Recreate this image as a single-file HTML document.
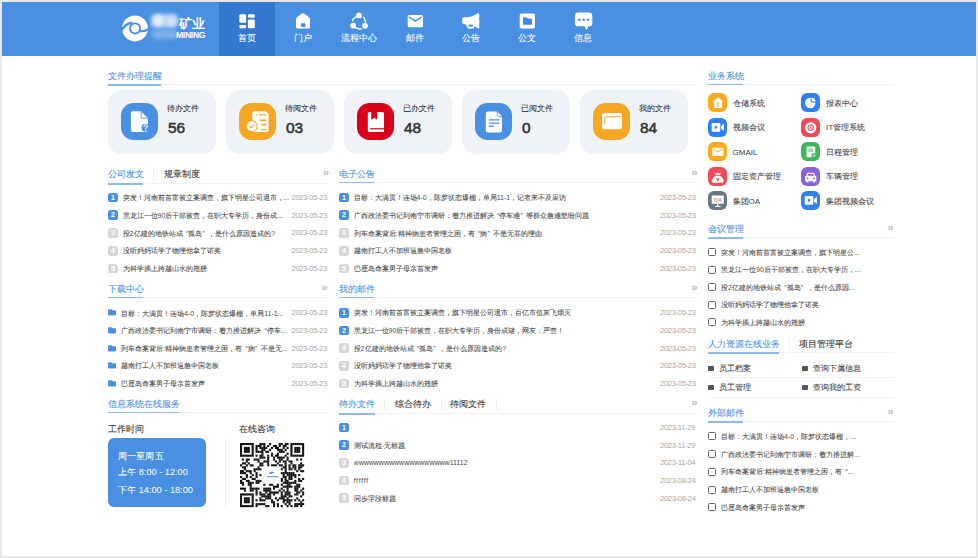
<!DOCTYPE html>
<html><head><meta charset="utf-8"><style>
*{margin:0;padding:0;box-sizing:border-box;}
html,body{width:978px;height:558px;overflow:hidden;background:#e9e8e6;font-family:"Liberation Sans",sans-serif;}
#page{position:absolute;left:2px;top:2px;width:974px;height:554px;background:#fff;}
#hdr{position:absolute;left:2px;top:2px;width:974px;height:53.6px;background:#4a90e2;}
.nav{position:absolute;top:2px;width:56px;height:53.6px;color:#fff;font-size:9px;line-height:9px;text-align:center;}
.nav.act{background:#3479cf;}
.nav svg{position:absolute;left:20px;top:12px;}
.nav .nl{position:absolute;left:0;right:0;top:32.3px;white-space:nowrap;}
.ttl{position:absolute;font-size:9px;line-height:9px;color:#4a90e2;white-space:nowrap;}
.tab2{position:absolute;font-size:9px;line-height:9px;color:#333;white-space:nowrap;}
.ul{position:absolute;height:1.6px;background:#8dbaee;margin-top:0.4px;}
.gl{position:absolute;height:1px;background:#f0f1f3;}
.vs{position:absolute;width:1px;background:#eceef0;}
.more{position:absolute;font-size:11px;line-height:9px;color:#b8b8b8;font-weight:bold;margin-left:2px;margin-top:-1px;}
.card{position:absolute;top:90px;width:108px;height:64px;border-radius:14px;background:#eff2f7;}
.card .ic{position:absolute;left:12.5px;top:12.5px;width:37px;height:37px;border-radius:12.5px;}
.card .ic svg{position:absolute;left:0;top:0;}
.card .lb{position:absolute;left:59px;top:15px;font-size:8px;line-height:8px;color:#333;white-space:nowrap;}
.card .nm{position:absolute;left:60px;top:29.6px;font-size:15.4px;line-height:16px;font-weight:normal;-webkit-text-stroke:0.55px #333;color:#333;}
.tx{position:absolute;font-size:7px;line-height:9px;color:#4a4a4a;white-space:nowrap;overflow:hidden;}
.bd{position:absolute;width:9.8px;height:9.8px;border-radius:2.6px;font-size:7px;line-height:9.8px;font-weight:bold;text-align:center;color:#fff;background:#4a90e2;}
.bd.g{background:#d6d7d9;}
.dt{position:absolute;font-size:7.6px;line-height:8px;color:#a8a8a8;letter-spacing:-0.32px;white-space:nowrap;}
.cb{position:absolute;width:8px;height:8px;border:1.3px solid #666;border-radius:1.5px;}
.sq{position:absolute;width:6px;height:5px;background:#555;border-radius:1px;}
.lb2{position:absolute;font-size:8px;line-height:9px;color:#444;white-space:nowrap;}
.bi{position:absolute;width:19px;height:19px;border-radius:6px;}
.bi svg{position:absolute;left:0;top:0;}
.c{display:inline-block;width:1em;-webkit-text-stroke:0.08px currentColor;}
</style></head><body>
<div id="page"></div><div id="hdr"></div>
<div class="ttl" style="left:108px;top:72px"><span class="c">文</span><span class="c">件</span><span class="c">办</span><span class="c">理</span><span class="c">提</span><span class="c">醒</span></div>
<div class="gl" style="left:108px;top:84px;width:590px"></div>
<div class="ul" style="left:108px;top:84px;width:53px"></div>
<div class="card" style="left:108px"><div class="ic" style="background:#4a90e2"><svg width="37" height="37" viewBox="0 0 37 37" style="position:absolute;left:0;top:0;"><path d="M11.5 8.2 L19.8 8.2 L27 15.3 L27 27.3 Q27 28.9 25.4 28.9 L11.5 28.9 Q9.9 28.9 9.9 27.3 L9.9 9.8 Q9.9 8.2 11.5 8.2 Z" fill="#fff"/><path d="M20.6 8.6 L20.6 13.6 Q20.6 14.5 21.5 14.5 L26.6 14.5 Z" fill="#4a90e2" opacity="0.0"/><path d="M20.2 8.2 L20.2 14.3 Q20.2 15.2 21.1 15.2 L27 15.2" stroke="#4a90e2" stroke-width="0.9" fill="none"/><circle cx="24.6" cy="24.8" r="4" fill="#4a90e2"/><path d="M23 23.4 Q23 21.8 24.7 21.8 Q26.3 21.8 26.3 23.3 Q26.3 24.3 25.2 24.8 Q24.7 25.1 24.7 26" stroke="#fff" stroke-width="1.1" fill="none" stroke-linecap="round"/><circle cx="24.7" cy="28" r="0.7" fill="#fff"/></svg></div><div class="lb"><span class="c">待</span><span class="c">办</span><span class="c">文</span><span class="c">件</span></div><div class="nm">56</div></div>
<div class="card" style="left:226px"><div class="ic" style="background:#f5a623"><svg width="37" height="37" viewBox="0 0 37 37" style="position:absolute;left:0;top:0;"><path d="M15 8.2 L26.5 8.2 L29.6 11.3 L29.6 27.3 Q29.6 28.9 28 28.9 L15 28.9 Q13.4 28.9 13.4 27.3 L13.4 9.8 Q13.4 8.2 15 8.2 Z" fill="#fff"/><rect x="20" y="11.2" width="7.5" height="1.4" rx="0.7" fill="#f5a623"/><circle cx="17.3" cy="11.9" r="0.9" fill="#f5a623"/><rect x="20.3" y="16.5" width="7.2" height="1.4" rx="0.7" fill="#f5a623"/><rect x="22.2" y="21" width="5.3" height="1.4" rx="0.7" fill="#f5a623"/><rect x="22.2" y="25.9" width="5.3" height="1.4" rx="0.7" fill="#f5a623"/><circle cx="12.7" cy="23.2" r="5.9" fill="#f5a623"/><circle cx="12.7" cy="23.2" r="4.9" fill="#fff"/><path d="M10.6 23.4 L12.1 24.8 L14.8 21.8" stroke="#f5a623" stroke-width="1.1" fill="none" stroke-linecap="round" stroke-linejoin="round"/></svg></div><div class="lb"><span class="c">待</span><span class="c">阅</span><span class="c">文</span><span class="c">件</span></div><div class="nm">03</div></div>
<div class="card" style="left:344px"><div class="ic" style="background:#d9001b"><svg width="37" height="37" viewBox="0 0 37 37" style="position:absolute;left:0;top:0;"><path d="M12.4 8.9 L25.4 8.9 Q27 8.9 27 10.5 L27 28.9 L12.4 28.9 Q10.8 28.9 10.8 27.3 L10.8 10.5 Q10.8 8.9 12.4 8.9 Z" fill="#fff"/><path d="M14.2 8.9 L20.2 8.9 L20.2 16.8 L17.2 14.8 L14.2 16.8 Z" fill="#d9001b"/><rect x="13.2" y="25.2" width="13.8" height="1.2" fill="#d9001b"/></svg></div><div class="lb"><span class="c">已</span><span class="c">办</span><span class="c">文</span><span class="c">件</span></div><div class="nm">48</div></div>
<div class="card" style="left:462px"><div class="ic" style="background:#4a90e2"><svg width="37" height="37" viewBox="0 0 37 37" style="position:absolute;left:0;top:0;"><path d="M13.2 8.5 L22.2 8.5 L27 13.3 L27 27.2 Q27 29.6 24.6 29.6 L13.2 29.6 Q10.8 29.6 10.8 27.2 L10.8 10.9 Q10.8 8.5 13.2 8.5 Z" fill="#fff"/><path d="M22.2 8.5 L22.2 11.8 Q22.2 13.3 23.7 13.3 L27 13.3" stroke="#4a90e2" stroke-width="0.9" fill="none"/><rect x="13.8" y="16.2" width="10.5" height="1.3" rx="0.5" fill="#4a90e2"/><rect x="13.8" y="19.4" width="10.5" height="1.3" rx="0.5" fill="#4a90e2"/><rect x="13.8" y="22.6" width="4.9" height="1.3" rx="0.5" fill="#4a90e2"/></svg></div><div class="lb"><span class="c">已</span><span class="c">阅</span><span class="c">文</span><span class="c">件</span></div><div class="nm">0</div></div>
<div class="card" style="left:580px"><div class="ic" style="background:#f5a623"><svg width="37" height="37" viewBox="0 0 37 37" style="position:absolute;left:0;top:0;"><rect x="9" y="10" width="20" height="16.2" rx="2.2" fill="#fff"/><path d="M11.9 20.3 L11.9 14.8 Q11.9 13.8 12.9 13.8 L27.6 13.8" stroke="#f5a623" stroke-width="1.1" fill="none" stroke-linecap="round"/></svg></div><div class="lb"><span class="c">我</span><span class="c">的</span><span class="c">文</span><span class="c">件</span></div><div class="nm">84</div></div>
<div class="ttl" style="left:108px;top:169.5px"><span class="c">公</span><span class="c">司</span><span class="c">发</span><span class="c">文</span></div>
<div class="vs" style="left:153px;top:168px;height:11px"></div>
<div class="tab2" style="left:163.5px;top:169.5px"><span class="c">规</span><span class="c">章</span><span class="c">制</span><span class="c">度</span></div>
<div class="gl" style="left:108px;top:183px;width:220px"></div>
<div class="ul" style="left:108px;top:183px;width:35px"></div>
<div class="more" style="left:321px;top:169px">&raquo;</div>
<div class="bd" style="left:108px;top:192.7px">1</div>
<div class="tx" style="left:122.6px;top:193.1px;width:166px"><span class="c">突</span><span class="c">发</span><span class="c">！</span><span class="c">河</span><span class="c">南</span><span class="c">前</span><span class="c">首</span><span class="c">富</span><span class="c">被</span><span class="c">立</span><span class="c">案</span><span class="c">调</span><span class="c">查</span><span class="c">，</span><span class="c">旗</span><span class="c">下</span><span class="c">明</span><span class="c">星</span><span class="c">公</span><span class="c">司</span><span class="c">退</span><span class="c">市</span><span class="c">，</span>...</div>
<div class="dt" style="left:291.5px;top:194.0px">2023-05-23</div>
<div class="bd" style="left:108px;top:210.4px">2</div>
<div class="tx" style="left:122.6px;top:210.8px;width:166px"><span class="c">黑</span><span class="c">龙</span><span class="c">江</span><span class="c">一</span><span class="c">位</span>90<span class="c">后</span><span class="c">干</span><span class="c">部</span><span class="c">被</span><span class="c">查</span><span class="c">，</span><span class="c">在</span><span class="c">职</span><span class="c">大</span><span class="c">专</span><span class="c">学</span><span class="c">历</span><span class="c">，</span><span class="c">身</span><span class="c">份</span><span class="c">成</span>...</div>
<div class="dt" style="left:291.5px;top:211.7px">2023-05-23</div>
<div class="bd g" style="left:108px;top:228.1px">3</div>
<div class="tx" style="left:122.6px;top:228.5px;width:166px"><span class="c">投</span>2<span class="c">亿</span><span class="c">建</span><span class="c">的</span><span class="c">地</span><span class="c">铁</span><span class="c">站</span><span class="c">成</span><span style="margin-left:3.5px">“</span><span class="c">孤</span><span class="c">岛</span><span style="margin-right:3.5px">”</span><span class="c">，</span><span class="c">是</span><span class="c">什</span><span class="c">么</span><span class="c">原</span><span class="c">因</span><span class="c">造</span><span class="c">成</span><span class="c">的</span>?</div>
<div class="dt" style="left:291.5px;top:229.4px">2023-05-23</div>
<div class="bd g" style="left:108px;top:245.8px">4</div>
<div class="tx" style="left:122.6px;top:246.2px;width:166px"><span class="c">没</span><span class="c">听</span><span class="c">妈</span><span class="c">妈</span><span class="c">话</span><span class="c">学</span><span class="c">了</span><span class="c">物</span><span class="c">理</span><span class="c">他</span><span class="c">拿</span><span class="c">了</span><span class="c">诺</span><span class="c">奖</span></div>
<div class="dt" style="left:291.5px;top:247.1px">2023-05-23</div>
<div class="bd g" style="left:108px;top:263.5px">5</div>
<div class="tx" style="left:122.6px;top:263.9px;width:166px"><span class="c">为</span><span class="c">科</span><span class="c">学</span><span class="c">插</span><span class="c">上</span><span class="c">跨</span><span class="c">越</span><span class="c">山</span><span class="c">水</span><span class="c">的</span><span class="c">翅</span><span class="c">膀</span></div>
<div class="dt" style="left:291.5px;top:264.8px">2023-05-23</div>
<div class="ttl" style="left:339px;top:169.5px"><span class="c">电</span><span class="c">子</span><span class="c">公</span><span class="c">告</span></div>
<div class="gl" style="left:339px;top:181.5px;width:359px"></div>
<div class="ul" style="left:339px;top:181.5px;width:35px"></div>
<div class="more" style="left:689.5px;top:168.5px">&raquo;</div>
<div class="bd" style="left:339px;top:192.7px">1</div>
<div class="tx" style="left:353.6px;top:193.1px;width:310px"><span class="c">目</span><span class="c">标</span><span class="c">：</span><span class="c">大</span><span class="c">满</span><span class="c">贯</span><span class="c">！</span><span class="c">连</span><span class="c">场</span>4-0<span class="c">，</span><span class="c">陈</span><span class="c">梦</span><span class="c">状</span><span class="c">态</span><span class="c">爆</span><span class="c">棚</span><span class="c">，</span><span class="c">单</span><span class="c">局</span>11-1<span class="c">，</span><span class="c">记</span><span class="c">者</span><span class="c">来</span><span class="c">不</span><span class="c">及</span><span class="c">采</span><span class="c">访</span></div>
<div class="dt" style="left:660px;top:194.0px">2023-05-23</div>
<div class="bd" style="left:339px;top:210.4px">2</div>
<div class="tx" style="left:353.6px;top:210.8px;width:310px"><span class="c">广</span><span class="c">西</span><span class="c">政</span><span class="c">法</span><span class="c">委</span><span class="c">书</span><span class="c">记</span><span class="c">到</span><span class="c">南</span><span class="c">宁</span><span class="c">市</span><span class="c">调</span><span class="c">研</span><span class="c">：</span><span class="c">着</span><span class="c">力</span><span class="c">推</span><span class="c">进</span><span class="c">解</span><span class="c">决</span><span style="margin-left:3.5px">“</span><span class="c">停</span><span class="c">车</span><span class="c">难</span><span style="margin-right:3.5px">”</span><span class="c">等</span><span class="c">群</span><span class="c">众</span><span class="c">急</span><span class="c">难</span><span class="c">愁</span><span class="c">盼</span><span class="c">问</span><span class="c">题</span></div>
<div class="dt" style="left:660px;top:211.7px">2023-05-23</div>
<div class="bd g" style="left:339px;top:228.1px">3</div>
<div class="tx" style="left:353.6px;top:228.5px;width:310px"><span class="c">列</span><span class="c">车</span><span class="c">命</span><span class="c">案</span><span class="c">背</span><span class="c">后</span>:<span class="c">精</span><span class="c">神</span><span class="c">病</span><span class="c">患</span><span class="c">者</span><span class="c">管</span><span class="c">理</span><span class="c">之</span><span class="c">困</span><span class="c">，</span><span class="c">有</span><span style="margin-left:3.5px">“</span><span class="c">病</span><span style="margin-right:3.5px">”</span><span class="c">不</span><span class="c">是</span><span class="c">无</span><span class="c">罪</span><span class="c">的</span><span class="c">理</span><span class="c">由</span></div>
<div class="dt" style="left:660px;top:229.4px">2023-05-23</div>
<div class="bd g" style="left:339px;top:245.8px">4</div>
<div class="tx" style="left:353.6px;top:246.2px;width:310px"><span class="c">越</span><span class="c">南</span><span class="c">打</span><span class="c">工</span><span class="c">人</span><span class="c">不</span><span class="c">加</span><span class="c">班</span><span class="c">逼</span><span class="c">急</span><span class="c">中</span><span class="c">国</span><span class="c">老</span><span class="c">板</span></div>
<div class="dt" style="left:660px;top:247.1px">2023-05-23</div>
<div class="bd g" style="left:339px;top:263.5px">5</div>
<div class="tx" style="left:353.6px;top:263.9px;width:310px"><span class="c">巴</span><span class="c">厘</span><span class="c">岛</span><span class="c">命</span><span class="c">案</span><span class="c">男</span><span class="c">子</span><span class="c">母</span><span class="c">亲</span><span class="c">首</span><span class="c">发</span><span class="c">声</span></div>
<div class="dt" style="left:660px;top:264.8px">2023-05-23</div>
<div class="ttl" style="left:108px;top:284.5px"><span class="c">下</span><span class="c">载</span><span class="c">中</span><span class="c">心</span></div>
<div class="gl" style="left:108px;top:296.5px;width:220px"></div>
<div class="ul" style="left:108px;top:296.5px;width:35px"></div>
<div class="more" style="left:319.5px;top:283.5px">&raquo;</div>
<div class="a" style="position:absolute;left:108px;top:309.4px"><svg width="9" height="7" viewBox="0 0 9 7" style="position:absolute;left:0;top:0"><path d="M1 0.2 L3.6 0.2 L4.4 1.2 L7 1.2 Q8 1.2 8 2.2 L8 5.6 Q8 6.4 7 6.4 L1 6.4 Q0 6.4 0 5.6 L0 1.2 Q0 0.2 1 0.2 Z" fill="#4a90e2"/><path d="M1.2 1.6 Q1.6 2.8 1 3.6" stroke="#8fbcf0" stroke-width="0.5" fill="none"/></svg></div>
<div class="tx" style="left:121px;top:308.5px;width:167px"><span class="c">目</span><span class="c">标</span><span class="c">：</span><span class="c">大</span><span class="c">满</span><span class="c">贯</span><span class="c">！</span><span class="c">连</span><span class="c">场</span>4-0<span class="c">，</span><span class="c">陈</span><span class="c">梦</span><span class="c">状</span><span class="c">态</span><span class="c">爆</span><span class="c">棚</span><span class="c">，</span><span class="c">单</span><span class="c">局</span>11-1...</div>
<div class="dt" style="left:291.5px;top:309.4px">2023-05-23</div>
<div class="a" style="position:absolute;left:108px;top:327.0px"><svg width="9" height="7" viewBox="0 0 9 7" style="position:absolute;left:0;top:0"><path d="M1 0.2 L3.6 0.2 L4.4 1.2 L7 1.2 Q8 1.2 8 2.2 L8 5.6 Q8 6.4 7 6.4 L1 6.4 Q0 6.4 0 5.6 L0 1.2 Q0 0.2 1 0.2 Z" fill="#4a90e2"/><path d="M1.2 1.6 Q1.6 2.8 1 3.6" stroke="#8fbcf0" stroke-width="0.5" fill="none"/></svg></div>
<div class="tx" style="left:121px;top:326.1px;width:167px"><span class="c">广</span><span class="c">西</span><span class="c">政</span><span class="c">法</span><span class="c">委</span><span class="c">书</span><span class="c">记</span><span class="c">到</span><span class="c">南</span><span class="c">宁</span><span class="c">市</span><span class="c">调</span><span class="c">研</span><span class="c">：</span><span class="c">着</span><span class="c">力</span><span class="c">推</span><span class="c">进</span><span class="c">解</span><span class="c">决</span><span style="margin-left:3.5px">“</span><span class="c">停</span><span class="c">车</span>...</div>
<div class="dt" style="left:291.5px;top:327.0px">2023-05-23</div>
<div class="a" style="position:absolute;left:108px;top:344.6px"><svg width="9" height="7" viewBox="0 0 9 7" style="position:absolute;left:0;top:0"><path d="M1 0.2 L3.6 0.2 L4.4 1.2 L7 1.2 Q8 1.2 8 2.2 L8 5.6 Q8 6.4 7 6.4 L1 6.4 Q0 6.4 0 5.6 L0 1.2 Q0 0.2 1 0.2 Z" fill="#4a90e2"/><path d="M1.2 1.6 Q1.6 2.8 1 3.6" stroke="#8fbcf0" stroke-width="0.5" fill="none"/></svg></div>
<div class="tx" style="left:121px;top:343.7px;width:167px"><span class="c">列</span><span class="c">车</span><span class="c">命</span><span class="c">案</span><span class="c">背</span><span class="c">后</span>:<span class="c">精</span><span class="c">神</span><span class="c">病</span><span class="c">患</span><span class="c">者</span><span class="c">管</span><span class="c">理</span><span class="c">之</span><span class="c">困</span><span class="c">，</span><span class="c">有</span><span style="margin-left:3.5px">“</span><span class="c">病</span><span style="margin-right:3.5px">”</span><span class="c">不</span><span class="c">是</span><span class="c">无</span>...</div>
<div class="dt" style="left:291.5px;top:344.6px">2023-05-23</div>
<div class="a" style="position:absolute;left:108px;top:362.2px"><svg width="9" height="7" viewBox="0 0 9 7" style="position:absolute;left:0;top:0"><path d="M1 0.2 L3.6 0.2 L4.4 1.2 L7 1.2 Q8 1.2 8 2.2 L8 5.6 Q8 6.4 7 6.4 L1 6.4 Q0 6.4 0 5.6 L0 1.2 Q0 0.2 1 0.2 Z" fill="#4a90e2"/><path d="M1.2 1.6 Q1.6 2.8 1 3.6" stroke="#8fbcf0" stroke-width="0.5" fill="none"/></svg></div>
<div class="tx" style="left:121px;top:361.3px;width:167px"><span class="c">越</span><span class="c">南</span><span class="c">打</span><span class="c">工</span><span class="c">人</span><span class="c">不</span><span class="c">加</span><span class="c">班</span><span class="c">逼</span><span class="c">急</span><span class="c">中</span><span class="c">国</span><span class="c">老</span><span class="c">板</span></div>
<div class="dt" style="left:291.5px;top:362.2px">2023-05-23</div>
<div class="a" style="position:absolute;left:108px;top:379.8px"><svg width="9" height="7" viewBox="0 0 9 7" style="position:absolute;left:0;top:0"><path d="M1 0.2 L3.6 0.2 L4.4 1.2 L7 1.2 Q8 1.2 8 2.2 L8 5.6 Q8 6.4 7 6.4 L1 6.4 Q0 6.4 0 5.6 L0 1.2 Q0 0.2 1 0.2 Z" fill="#4a90e2"/><path d="M1.2 1.6 Q1.6 2.8 1 3.6" stroke="#8fbcf0" stroke-width="0.5" fill="none"/></svg></div>
<div class="tx" style="left:121px;top:378.9px;width:167px"><span class="c">巴</span><span class="c">厘</span><span class="c">岛</span><span class="c">命</span><span class="c">案</span><span class="c">男</span><span class="c">子</span><span class="c">母</span><span class="c">亲</span><span class="c">首</span><span class="c">发</span><span class="c">声</span></div>
<div class="dt" style="left:291.5px;top:379.8px">2023-05-23</div>
<div class="ttl" style="left:339px;top:284.5px"><span class="c">我</span><span class="c">的</span><span class="c">邮</span><span class="c">件</span></div>
<div class="gl" style="left:339px;top:296.5px;width:359px"></div>
<div class="ul" style="left:339px;top:296.5px;width:35px"></div>
<div class="more" style="left:689.5px;top:283.5px">&raquo;</div>
<div class="bd" style="left:339px;top:307.8px">1</div>
<div class="tx" style="left:353.6px;top:308.2px;width:310px"><span class="c">突</span><span class="c">发</span><span class="c">！</span><span class="c">河</span><span class="c">南</span><span class="c">前</span><span class="c">首</span><span class="c">富</span><span class="c">被</span><span class="c">立</span><span class="c">案</span><span class="c">调</span><span class="c">查</span><span class="c">，</span><span class="c">旗</span><span class="c">下</span><span class="c">明</span><span class="c">星</span><span class="c">公</span><span class="c">司</span><span class="c">退</span><span class="c">市</span><span class="c">，</span><span class="c">百</span><span class="c">亿</span><span class="c">市</span><span class="c">值</span><span class="c">灰</span><span class="c">飞</span><span class="c">烟</span><span class="c">灭</span></div>
<div class="dt" style="left:660px;top:309.1px">2023-05-23</div>
<div class="bd" style="left:339px;top:325.5px">2</div>
<div class="tx" style="left:353.6px;top:325.9px;width:310px"><span class="c">黑</span><span class="c">龙</span><span class="c">江</span><span class="c">一</span><span class="c">位</span>90<span class="c">后</span><span class="c">干</span><span class="c">部</span><span class="c">被</span><span class="c">查</span><span class="c">，</span><span class="c">在</span><span class="c">职</span><span class="c">大</span><span class="c">专</span><span class="c">学</span><span class="c">历</span><span class="c">，</span><span class="c">身</span><span class="c">份</span><span class="c">成</span><span class="c">谜</span><span class="c">，</span><span class="c">网</span><span class="c">友</span><span class="c">：</span><span class="c">严</span><span class="c">查</span><span class="c">！</span></div>
<div class="dt" style="left:660px;top:326.8px">2023-05-23</div>
<div class="bd g" style="left:339px;top:343.2px">3</div>
<div class="tx" style="left:353.6px;top:343.6px;width:310px"><span class="c">投</span>2<span class="c">亿</span><span class="c">建</span><span class="c">的</span><span class="c">地</span><span class="c">铁</span><span class="c">站</span><span class="c">成</span><span style="margin-left:3.5px">“</span><span class="c">孤</span><span class="c">岛</span><span style="margin-right:3.5px">”</span><span class="c">，</span><span class="c">是</span><span class="c">什</span><span class="c">么</span><span class="c">原</span><span class="c">因</span><span class="c">造</span><span class="c">成</span><span class="c">的</span>?</div>
<div class="dt" style="left:660px;top:344.5px">2023-05-23</div>
<div class="bd g" style="left:339px;top:360.9px">4</div>
<div class="tx" style="left:353.6px;top:361.3px;width:310px"><span class="c">没</span><span class="c">听</span><span class="c">妈</span><span class="c">妈</span><span class="c">话</span><span class="c">学</span><span class="c">了</span><span class="c">物</span><span class="c">理</span><span class="c">他</span><span class="c">拿</span><span class="c">了</span><span class="c">诺</span><span class="c">奖</span></div>
<div class="dt" style="left:660px;top:362.2px">2023-05-23</div>
<div class="bd g" style="left:339px;top:378.6px">5</div>
<div class="tx" style="left:353.6px;top:379.0px;width:310px"><span class="c">为</span><span class="c">科</span><span class="c">学</span><span class="c">插</span><span class="c">上</span><span class="c">跨</span><span class="c">越</span><span class="c">山</span><span class="c">水</span><span class="c">的</span><span class="c">翅</span><span class="c">膀</span></div>
<div class="dt" style="left:660px;top:379.9px">2023-05-23</div>
<div class="ttl" style="left:108px;top:399.5px"><span class="c">信</span><span class="c">息</span><span class="c">系</span><span class="c">统</span><span class="c">在</span><span class="c">线</span><span class="c">服</span><span class="c">务</span></div>
<div class="gl" style="left:108px;top:411.5px;width:220px"></div>
<div class="ul" style="left:108px;top:411.5px;width:71px"></div>
<div class="tab2" style="left:108px;top:425px"><span class="c">工</span><span class="c">作</span><span class="c">时</span><span class="c">间</span></div>
<div class="tab2" style="left:238.5px;top:425px"><span class="c">在</span><span class="c">线</span><span class="c">咨</span><span class="c">询</span></div>
<div style="position:absolute;left:108px;top:438px;width:98px;height:69px;border-radius:6px;background:#4a90e2;color:#fff;font-size:9.2px;line-height:9px;"><div style="position:absolute;left:9.8px;top:13.8px;white-space:nowrap"><span class="c">周</span><span class="c">一</span><span class="c">至</span><span class="c">周</span><span class="c">五</span></div><div style="position:absolute;left:9.8px;top:30.2px;white-space:nowrap"><span class="c">上</span><span class="c">午</span> 8:00 - 12:00</div><div style="position:absolute;left:9.8px;top:47.6px;white-space:nowrap"><span class="c">下</span><span class="c">午</span> 14:00 - 18:00</div></div>
<div class="vs" style="left:225px;top:439px;height:68px"></div>
<div style="position:absolute;left:240px;top:443px;width:65px;height:65px;"><svg width="65" height="65" viewBox="0 0 65 65" style="position:absolute;left:0;top:0"><g fill="#111"><rect x="0.00" y="0.00" width="2.09" height="2.09"/><rect x="1.94" y="0.00" width="2.09" height="2.09"/><rect x="3.88" y="0.00" width="2.09" height="2.09"/><rect x="5.82" y="0.00" width="2.09" height="2.09"/><rect x="7.76" y="0.00" width="2.09" height="2.09"/><rect x="9.70" y="0.00" width="2.09" height="2.09"/><rect x="11.64" y="0.00" width="2.09" height="2.09"/><rect x="19.39" y="0.00" width="2.09" height="2.09"/><rect x="21.33" y="0.00" width="2.09" height="2.09"/><rect x="23.27" y="0.00" width="2.09" height="2.09"/><rect x="29.09" y="0.00" width="2.09" height="2.09"/><rect x="38.79" y="0.00" width="2.09" height="2.09"/><rect x="40.73" y="0.00" width="2.09" height="2.09"/><rect x="44.61" y="0.00" width="2.09" height="2.09"/><rect x="46.55" y="0.00" width="2.09" height="2.09"/><rect x="50.42" y="0.00" width="2.09" height="2.09"/><rect x="52.36" y="0.00" width="2.09" height="2.09"/><rect x="54.30" y="0.00" width="2.09" height="2.09"/><rect x="56.24" y="0.00" width="2.09" height="2.09"/><rect x="58.18" y="0.00" width="2.09" height="2.09"/><rect x="60.12" y="0.00" width="2.09" height="2.09"/><rect x="62.06" y="0.00" width="2.09" height="2.09"/><rect x="0.00" y="1.94" width="2.09" height="2.09"/><rect x="11.64" y="1.94" width="2.09" height="2.09"/><rect x="15.52" y="1.94" width="2.09" height="2.09"/><rect x="17.45" y="1.94" width="2.09" height="2.09"/><rect x="19.39" y="1.94" width="2.09" height="2.09"/><rect x="23.27" y="1.94" width="2.09" height="2.09"/><rect x="27.15" y="1.94" width="2.09" height="2.09"/><rect x="32.97" y="1.94" width="2.09" height="2.09"/><rect x="34.91" y="1.94" width="2.09" height="2.09"/><rect x="38.79" y="1.94" width="2.09" height="2.09"/><rect x="42.67" y="1.94" width="2.09" height="2.09"/><rect x="44.61" y="1.94" width="2.09" height="2.09"/><rect x="50.42" y="1.94" width="2.09" height="2.09"/><rect x="62.06" y="1.94" width="2.09" height="2.09"/><rect x="0.00" y="3.88" width="2.09" height="2.09"/><rect x="3.88" y="3.88" width="2.09" height="2.09"/><rect x="5.82" y="3.88" width="2.09" height="2.09"/><rect x="7.76" y="3.88" width="2.09" height="2.09"/><rect x="11.64" y="3.88" width="2.09" height="2.09"/><rect x="15.52" y="3.88" width="2.09" height="2.09"/><rect x="19.39" y="3.88" width="2.09" height="2.09"/><rect x="21.33" y="3.88" width="2.09" height="2.09"/><rect x="23.27" y="3.88" width="2.09" height="2.09"/><rect x="25.21" y="3.88" width="2.09" height="2.09"/><rect x="31.03" y="3.88" width="2.09" height="2.09"/><rect x="34.91" y="3.88" width="2.09" height="2.09"/><rect x="36.85" y="3.88" width="2.09" height="2.09"/><rect x="42.67" y="3.88" width="2.09" height="2.09"/><rect x="46.55" y="3.88" width="2.09" height="2.09"/><rect x="50.42" y="3.88" width="2.09" height="2.09"/><rect x="54.30" y="3.88" width="2.09" height="2.09"/><rect x="56.24" y="3.88" width="2.09" height="2.09"/><rect x="58.18" y="3.88" width="2.09" height="2.09"/><rect x="62.06" y="3.88" width="2.09" height="2.09"/><rect x="0.00" y="5.82" width="2.09" height="2.09"/><rect x="3.88" y="5.82" width="2.09" height="2.09"/><rect x="5.82" y="5.82" width="2.09" height="2.09"/><rect x="7.76" y="5.82" width="2.09" height="2.09"/><rect x="11.64" y="5.82" width="2.09" height="2.09"/><rect x="15.52" y="5.82" width="2.09" height="2.09"/><rect x="21.33" y="5.82" width="2.09" height="2.09"/><rect x="23.27" y="5.82" width="2.09" height="2.09"/><rect x="29.09" y="5.82" width="2.09" height="2.09"/><rect x="36.85" y="5.82" width="2.09" height="2.09"/><rect x="38.79" y="5.82" width="2.09" height="2.09"/><rect x="40.73" y="5.82" width="2.09" height="2.09"/><rect x="44.61" y="5.82" width="2.09" height="2.09"/><rect x="50.42" y="5.82" width="2.09" height="2.09"/><rect x="54.30" y="5.82" width="2.09" height="2.09"/><rect x="56.24" y="5.82" width="2.09" height="2.09"/><rect x="58.18" y="5.82" width="2.09" height="2.09"/><rect x="62.06" y="5.82" width="2.09" height="2.09"/><rect x="0.00" y="7.76" width="2.09" height="2.09"/><rect x="3.88" y="7.76" width="2.09" height="2.09"/><rect x="5.82" y="7.76" width="2.09" height="2.09"/><rect x="7.76" y="7.76" width="2.09" height="2.09"/><rect x="11.64" y="7.76" width="2.09" height="2.09"/><rect x="15.52" y="7.76" width="2.09" height="2.09"/><rect x="17.45" y="7.76" width="2.09" height="2.09"/><rect x="19.39" y="7.76" width="2.09" height="2.09"/><rect x="21.33" y="7.76" width="2.09" height="2.09"/><rect x="25.21" y="7.76" width="2.09" height="2.09"/><rect x="27.15" y="7.76" width="2.09" height="2.09"/><rect x="38.79" y="7.76" width="2.09" height="2.09"/><rect x="40.73" y="7.76" width="2.09" height="2.09"/><rect x="42.67" y="7.76" width="2.09" height="2.09"/><rect x="50.42" y="7.76" width="2.09" height="2.09"/><rect x="54.30" y="7.76" width="2.09" height="2.09"/><rect x="56.24" y="7.76" width="2.09" height="2.09"/><rect x="58.18" y="7.76" width="2.09" height="2.09"/><rect x="62.06" y="7.76" width="2.09" height="2.09"/><rect x="0.00" y="9.70" width="2.09" height="2.09"/><rect x="11.64" y="9.70" width="2.09" height="2.09"/><rect x="21.33" y="9.70" width="2.09" height="2.09"/><rect x="31.03" y="9.70" width="2.09" height="2.09"/><rect x="36.85" y="9.70" width="2.09" height="2.09"/><rect x="46.55" y="9.70" width="2.09" height="2.09"/><rect x="50.42" y="9.70" width="2.09" height="2.09"/><rect x="62.06" y="9.70" width="2.09" height="2.09"/><rect x="0.00" y="11.64" width="2.09" height="2.09"/><rect x="1.94" y="11.64" width="2.09" height="2.09"/><rect x="3.88" y="11.64" width="2.09" height="2.09"/><rect x="5.82" y="11.64" width="2.09" height="2.09"/><rect x="7.76" y="11.64" width="2.09" height="2.09"/><rect x="9.70" y="11.64" width="2.09" height="2.09"/><rect x="11.64" y="11.64" width="2.09" height="2.09"/><rect x="15.52" y="11.64" width="2.09" height="2.09"/><rect x="19.39" y="11.64" width="2.09" height="2.09"/><rect x="21.33" y="11.64" width="2.09" height="2.09"/><rect x="27.15" y="11.64" width="2.09" height="2.09"/><rect x="31.03" y="11.64" width="2.09" height="2.09"/><rect x="34.91" y="11.64" width="2.09" height="2.09"/><rect x="36.85" y="11.64" width="2.09" height="2.09"/><rect x="44.61" y="11.64" width="2.09" height="2.09"/><rect x="50.42" y="11.64" width="2.09" height="2.09"/><rect x="52.36" y="11.64" width="2.09" height="2.09"/><rect x="54.30" y="11.64" width="2.09" height="2.09"/><rect x="56.24" y="11.64" width="2.09" height="2.09"/><rect x="58.18" y="11.64" width="2.09" height="2.09"/><rect x="60.12" y="11.64" width="2.09" height="2.09"/><rect x="62.06" y="11.64" width="2.09" height="2.09"/><rect x="19.39" y="13.58" width="2.09" height="2.09"/><rect x="21.33" y="13.58" width="2.09" height="2.09"/><rect x="23.27" y="13.58" width="2.09" height="2.09"/><rect x="27.15" y="13.58" width="2.09" height="2.09"/><rect x="32.97" y="13.58" width="2.09" height="2.09"/><rect x="36.85" y="13.58" width="2.09" height="2.09"/><rect x="38.79" y="13.58" width="2.09" height="2.09"/><rect x="40.73" y="13.58" width="2.09" height="2.09"/><rect x="42.67" y="13.58" width="2.09" height="2.09"/><rect x="46.55" y="13.58" width="2.09" height="2.09"/><rect x="1.94" y="15.52" width="2.09" height="2.09"/><rect x="5.82" y="15.52" width="2.09" height="2.09"/><rect x="7.76" y="15.52" width="2.09" height="2.09"/><rect x="13.58" y="15.52" width="2.09" height="2.09"/><rect x="15.52" y="15.52" width="2.09" height="2.09"/><rect x="17.45" y="15.52" width="2.09" height="2.09"/><rect x="27.15" y="15.52" width="2.09" height="2.09"/><rect x="32.97" y="15.52" width="2.09" height="2.09"/><rect x="38.79" y="15.52" width="2.09" height="2.09"/><rect x="40.73" y="15.52" width="2.09" height="2.09"/><rect x="46.55" y="15.52" width="2.09" height="2.09"/><rect x="56.24" y="15.52" width="2.09" height="2.09"/><rect x="60.12" y="15.52" width="2.09" height="2.09"/><rect x="5.82" y="17.45" width="2.09" height="2.09"/><rect x="17.45" y="17.45" width="2.09" height="2.09"/><rect x="23.27" y="17.45" width="2.09" height="2.09"/><rect x="25.21" y="17.45" width="2.09" height="2.09"/><rect x="27.15" y="17.45" width="2.09" height="2.09"/><rect x="34.91" y="17.45" width="2.09" height="2.09"/><rect x="38.79" y="17.45" width="2.09" height="2.09"/><rect x="42.67" y="17.45" width="2.09" height="2.09"/><rect x="44.61" y="17.45" width="2.09" height="2.09"/><rect x="48.48" y="17.45" width="2.09" height="2.09"/><rect x="50.42" y="17.45" width="2.09" height="2.09"/><rect x="1.94" y="19.39" width="2.09" height="2.09"/><rect x="3.88" y="19.39" width="2.09" height="2.09"/><rect x="7.76" y="19.39" width="2.09" height="2.09"/><rect x="19.39" y="19.39" width="2.09" height="2.09"/><rect x="21.33" y="19.39" width="2.09" height="2.09"/><rect x="27.15" y="19.39" width="2.09" height="2.09"/><rect x="36.85" y="19.39" width="2.09" height="2.09"/><rect x="44.61" y="19.39" width="2.09" height="2.09"/><rect x="50.42" y="19.39" width="2.09" height="2.09"/><rect x="60.12" y="19.39" width="2.09" height="2.09"/><rect x="0.00" y="21.33" width="2.09" height="2.09"/><rect x="5.82" y="21.33" width="2.09" height="2.09"/><rect x="9.70" y="21.33" width="2.09" height="2.09"/><rect x="11.64" y="21.33" width="2.09" height="2.09"/><rect x="19.39" y="21.33" width="2.09" height="2.09"/><rect x="21.33" y="21.33" width="2.09" height="2.09"/><rect x="27.15" y="21.33" width="2.09" height="2.09"/><rect x="31.03" y="21.33" width="2.09" height="2.09"/><rect x="32.97" y="21.33" width="2.09" height="2.09"/><rect x="34.91" y="21.33" width="2.09" height="2.09"/><rect x="38.79" y="21.33" width="2.09" height="2.09"/><rect x="40.73" y="21.33" width="2.09" height="2.09"/><rect x="44.61" y="21.33" width="2.09" height="2.09"/><rect x="48.48" y="21.33" width="2.09" height="2.09"/><rect x="52.36" y="21.33" width="2.09" height="2.09"/><rect x="54.30" y="21.33" width="2.09" height="2.09"/><rect x="58.18" y="21.33" width="2.09" height="2.09"/><rect x="60.12" y="21.33" width="2.09" height="2.09"/><rect x="62.06" y="21.33" width="2.09" height="2.09"/><rect x="1.94" y="23.27" width="2.09" height="2.09"/><rect x="3.88" y="23.27" width="2.09" height="2.09"/><rect x="17.45" y="23.27" width="2.09" height="2.09"/><rect x="42.67" y="23.27" width="2.09" height="2.09"/><rect x="44.61" y="23.27" width="2.09" height="2.09"/><rect x="48.48" y="23.27" width="2.09" height="2.09"/><rect x="52.36" y="23.27" width="2.09" height="2.09"/><rect x="54.30" y="23.27" width="2.09" height="2.09"/><rect x="58.18" y="23.27" width="2.09" height="2.09"/><rect x="60.12" y="23.27" width="2.09" height="2.09"/><rect x="3.88" y="25.21" width="2.09" height="2.09"/><rect x="13.58" y="25.21" width="2.09" height="2.09"/><rect x="15.52" y="25.21" width="2.09" height="2.09"/><rect x="17.45" y="25.21" width="2.09" height="2.09"/><rect x="19.39" y="25.21" width="2.09" height="2.09"/><rect x="40.73" y="25.21" width="2.09" height="2.09"/><rect x="44.61" y="25.21" width="2.09" height="2.09"/><rect x="48.48" y="25.21" width="2.09" height="2.09"/><rect x="50.42" y="25.21" width="2.09" height="2.09"/><rect x="54.30" y="25.21" width="2.09" height="2.09"/><rect x="58.18" y="25.21" width="2.09" height="2.09"/><rect x="0.00" y="27.15" width="2.09" height="2.09"/><rect x="1.94" y="27.15" width="2.09" height="2.09"/><rect x="5.82" y="27.15" width="2.09" height="2.09"/><rect x="7.76" y="27.15" width="2.09" height="2.09"/><rect x="9.70" y="27.15" width="2.09" height="2.09"/><rect x="13.58" y="27.15" width="2.09" height="2.09"/><rect x="44.61" y="27.15" width="2.09" height="2.09"/><rect x="56.24" y="27.15" width="2.09" height="2.09"/><rect x="60.12" y="27.15" width="2.09" height="2.09"/><rect x="62.06" y="27.15" width="2.09" height="2.09"/><rect x="0.00" y="29.09" width="2.09" height="2.09"/><rect x="1.94" y="29.09" width="2.09" height="2.09"/><rect x="3.88" y="29.09" width="2.09" height="2.09"/><rect x="9.70" y="29.09" width="2.09" height="2.09"/><rect x="15.52" y="29.09" width="2.09" height="2.09"/><rect x="40.73" y="29.09" width="2.09" height="2.09"/><rect x="42.67" y="29.09" width="2.09" height="2.09"/><rect x="44.61" y="29.09" width="2.09" height="2.09"/><rect x="46.55" y="29.09" width="2.09" height="2.09"/><rect x="48.48" y="29.09" width="2.09" height="2.09"/><rect x="50.42" y="29.09" width="2.09" height="2.09"/><rect x="52.36" y="29.09" width="2.09" height="2.09"/><rect x="5.82" y="31.03" width="2.09" height="2.09"/><rect x="11.64" y="31.03" width="2.09" height="2.09"/><rect x="15.52" y="31.03" width="2.09" height="2.09"/><rect x="19.39" y="31.03" width="2.09" height="2.09"/><rect x="42.67" y="31.03" width="2.09" height="2.09"/><rect x="46.55" y="31.03" width="2.09" height="2.09"/><rect x="48.48" y="31.03" width="2.09" height="2.09"/><rect x="50.42" y="31.03" width="2.09" height="2.09"/><rect x="52.36" y="31.03" width="2.09" height="2.09"/><rect x="54.30" y="31.03" width="2.09" height="2.09"/><rect x="58.18" y="31.03" width="2.09" height="2.09"/><rect x="0.00" y="32.97" width="2.09" height="2.09"/><rect x="5.82" y="32.97" width="2.09" height="2.09"/><rect x="9.70" y="32.97" width="2.09" height="2.09"/><rect x="15.52" y="32.97" width="2.09" height="2.09"/><rect x="42.67" y="32.97" width="2.09" height="2.09"/><rect x="44.61" y="32.97" width="2.09" height="2.09"/><rect x="48.48" y="32.97" width="2.09" height="2.09"/><rect x="50.42" y="32.97" width="2.09" height="2.09"/><rect x="54.30" y="32.97" width="2.09" height="2.09"/><rect x="1.94" y="34.91" width="2.09" height="2.09"/><rect x="3.88" y="34.91" width="2.09" height="2.09"/><rect x="11.64" y="34.91" width="2.09" height="2.09"/><rect x="13.58" y="34.91" width="2.09" height="2.09"/><rect x="40.73" y="34.91" width="2.09" height="2.09"/><rect x="44.61" y="34.91" width="2.09" height="2.09"/><rect x="48.48" y="34.91" width="2.09" height="2.09"/><rect x="50.42" y="34.91" width="2.09" height="2.09"/><rect x="58.18" y="34.91" width="2.09" height="2.09"/><rect x="62.06" y="34.91" width="2.09" height="2.09"/><rect x="0.00" y="36.85" width="2.09" height="2.09"/><rect x="5.82" y="36.85" width="2.09" height="2.09"/><rect x="7.76" y="36.85" width="2.09" height="2.09"/><rect x="15.52" y="36.85" width="2.09" height="2.09"/><rect x="17.45" y="36.85" width="2.09" height="2.09"/><rect x="19.39" y="36.85" width="2.09" height="2.09"/><rect x="40.73" y="36.85" width="2.09" height="2.09"/><rect x="44.61" y="36.85" width="2.09" height="2.09"/><rect x="46.55" y="36.85" width="2.09" height="2.09"/><rect x="54.30" y="36.85" width="2.09" height="2.09"/><rect x="58.18" y="36.85" width="2.09" height="2.09"/><rect x="60.12" y="36.85" width="2.09" height="2.09"/><rect x="0.00" y="38.79" width="2.09" height="2.09"/><rect x="1.94" y="38.79" width="2.09" height="2.09"/><rect x="7.76" y="38.79" width="2.09" height="2.09"/><rect x="9.70" y="38.79" width="2.09" height="2.09"/><rect x="11.64" y="38.79" width="2.09" height="2.09"/><rect x="15.52" y="38.79" width="2.09" height="2.09"/><rect x="17.45" y="38.79" width="2.09" height="2.09"/><rect x="42.67" y="38.79" width="2.09" height="2.09"/><rect x="44.61" y="38.79" width="2.09" height="2.09"/><rect x="46.55" y="38.79" width="2.09" height="2.09"/><rect x="48.48" y="38.79" width="2.09" height="2.09"/><rect x="50.42" y="38.79" width="2.09" height="2.09"/><rect x="52.36" y="38.79" width="2.09" height="2.09"/><rect x="54.30" y="38.79" width="2.09" height="2.09"/><rect x="1.94" y="40.73" width="2.09" height="2.09"/><rect x="7.76" y="40.73" width="2.09" height="2.09"/><rect x="9.70" y="40.73" width="2.09" height="2.09"/><rect x="23.27" y="40.73" width="2.09" height="2.09"/><rect x="29.09" y="40.73" width="2.09" height="2.09"/><rect x="31.03" y="40.73" width="2.09" height="2.09"/><rect x="36.85" y="40.73" width="2.09" height="2.09"/><rect x="40.73" y="40.73" width="2.09" height="2.09"/><rect x="46.55" y="40.73" width="2.09" height="2.09"/><rect x="48.48" y="40.73" width="2.09" height="2.09"/><rect x="56.24" y="40.73" width="2.09" height="2.09"/><rect x="58.18" y="40.73" width="2.09" height="2.09"/><rect x="9.70" y="42.67" width="2.09" height="2.09"/><rect x="32.97" y="42.67" width="2.09" height="2.09"/><rect x="34.91" y="42.67" width="2.09" height="2.09"/><rect x="36.85" y="42.67" width="2.09" height="2.09"/><rect x="42.67" y="42.67" width="2.09" height="2.09"/><rect x="44.61" y="42.67" width="2.09" height="2.09"/><rect x="46.55" y="42.67" width="2.09" height="2.09"/><rect x="48.48" y="42.67" width="2.09" height="2.09"/><rect x="50.42" y="42.67" width="2.09" height="2.09"/><rect x="54.30" y="42.67" width="2.09" height="2.09"/><rect x="56.24" y="42.67" width="2.09" height="2.09"/><rect x="58.18" y="42.67" width="2.09" height="2.09"/><rect x="0.00" y="44.61" width="2.09" height="2.09"/><rect x="1.94" y="44.61" width="2.09" height="2.09"/><rect x="3.88" y="44.61" width="2.09" height="2.09"/><rect x="9.70" y="44.61" width="2.09" height="2.09"/><rect x="11.64" y="44.61" width="2.09" height="2.09"/><rect x="13.58" y="44.61" width="2.09" height="2.09"/><rect x="15.52" y="44.61" width="2.09" height="2.09"/><rect x="17.45" y="44.61" width="2.09" height="2.09"/><rect x="23.27" y="44.61" width="2.09" height="2.09"/><rect x="25.21" y="44.61" width="2.09" height="2.09"/><rect x="27.15" y="44.61" width="2.09" height="2.09"/><rect x="29.09" y="44.61" width="2.09" height="2.09"/><rect x="32.97" y="44.61" width="2.09" height="2.09"/><rect x="40.73" y="44.61" width="2.09" height="2.09"/><rect x="46.55" y="44.61" width="2.09" height="2.09"/><rect x="54.30" y="44.61" width="2.09" height="2.09"/><rect x="56.24" y="44.61" width="2.09" height="2.09"/><rect x="62.06" y="44.61" width="2.09" height="2.09"/><rect x="3.88" y="46.55" width="2.09" height="2.09"/><rect x="9.70" y="46.55" width="2.09" height="2.09"/><rect x="11.64" y="46.55" width="2.09" height="2.09"/><rect x="15.52" y="46.55" width="2.09" height="2.09"/><rect x="23.27" y="46.55" width="2.09" height="2.09"/><rect x="25.21" y="46.55" width="2.09" height="2.09"/><rect x="27.15" y="46.55" width="2.09" height="2.09"/><rect x="29.09" y="46.55" width="2.09" height="2.09"/><rect x="38.79" y="46.55" width="2.09" height="2.09"/><rect x="42.67" y="46.55" width="2.09" height="2.09"/><rect x="46.55" y="46.55" width="2.09" height="2.09"/><rect x="54.30" y="46.55" width="2.09" height="2.09"/><rect x="56.24" y="46.55" width="2.09" height="2.09"/><rect x="60.12" y="46.55" width="2.09" height="2.09"/><rect x="15.52" y="48.48" width="2.09" height="2.09"/><rect x="19.39" y="48.48" width="2.09" height="2.09"/><rect x="25.21" y="48.48" width="2.09" height="2.09"/><rect x="29.09" y="48.48" width="2.09" height="2.09"/><rect x="31.03" y="48.48" width="2.09" height="2.09"/><rect x="32.97" y="48.48" width="2.09" height="2.09"/><rect x="34.91" y="48.48" width="2.09" height="2.09"/><rect x="36.85" y="48.48" width="2.09" height="2.09"/><rect x="40.73" y="48.48" width="2.09" height="2.09"/><rect x="44.61" y="48.48" width="2.09" height="2.09"/><rect x="46.55" y="48.48" width="2.09" height="2.09"/><rect x="48.48" y="48.48" width="2.09" height="2.09"/><rect x="56.24" y="48.48" width="2.09" height="2.09"/><rect x="58.18" y="48.48" width="2.09" height="2.09"/><rect x="62.06" y="48.48" width="2.09" height="2.09"/><rect x="0.00" y="50.42" width="2.09" height="2.09"/><rect x="1.94" y="50.42" width="2.09" height="2.09"/><rect x="3.88" y="50.42" width="2.09" height="2.09"/><rect x="5.82" y="50.42" width="2.09" height="2.09"/><rect x="7.76" y="50.42" width="2.09" height="2.09"/><rect x="9.70" y="50.42" width="2.09" height="2.09"/><rect x="11.64" y="50.42" width="2.09" height="2.09"/><rect x="15.52" y="50.42" width="2.09" height="2.09"/><rect x="19.39" y="50.42" width="2.09" height="2.09"/><rect x="21.33" y="50.42" width="2.09" height="2.09"/><rect x="23.27" y="50.42" width="2.09" height="2.09"/><rect x="27.15" y="50.42" width="2.09" height="2.09"/><rect x="29.09" y="50.42" width="2.09" height="2.09"/><rect x="32.97" y="50.42" width="2.09" height="2.09"/><rect x="40.73" y="50.42" width="2.09" height="2.09"/><rect x="44.61" y="50.42" width="2.09" height="2.09"/><rect x="46.55" y="50.42" width="2.09" height="2.09"/><rect x="48.48" y="50.42" width="2.09" height="2.09"/><rect x="54.30" y="50.42" width="2.09" height="2.09"/><rect x="56.24" y="50.42" width="2.09" height="2.09"/><rect x="62.06" y="50.42" width="2.09" height="2.09"/><rect x="0.00" y="52.36" width="2.09" height="2.09"/><rect x="11.64" y="52.36" width="2.09" height="2.09"/><rect x="21.33" y="52.36" width="2.09" height="2.09"/><rect x="23.27" y="52.36" width="2.09" height="2.09"/><rect x="25.21" y="52.36" width="2.09" height="2.09"/><rect x="27.15" y="52.36" width="2.09" height="2.09"/><rect x="29.09" y="52.36" width="2.09" height="2.09"/><rect x="40.73" y="52.36" width="2.09" height="2.09"/><rect x="42.67" y="52.36" width="2.09" height="2.09"/><rect x="44.61" y="52.36" width="2.09" height="2.09"/><rect x="48.48" y="52.36" width="2.09" height="2.09"/><rect x="50.42" y="52.36" width="2.09" height="2.09"/><rect x="60.12" y="52.36" width="2.09" height="2.09"/><rect x="0.00" y="54.30" width="2.09" height="2.09"/><rect x="3.88" y="54.30" width="2.09" height="2.09"/><rect x="5.82" y="54.30" width="2.09" height="2.09"/><rect x="7.76" y="54.30" width="2.09" height="2.09"/><rect x="11.64" y="54.30" width="2.09" height="2.09"/><rect x="19.39" y="54.30" width="2.09" height="2.09"/><rect x="25.21" y="54.30" width="2.09" height="2.09"/><rect x="27.15" y="54.30" width="2.09" height="2.09"/><rect x="29.09" y="54.30" width="2.09" height="2.09"/><rect x="34.91" y="54.30" width="2.09" height="2.09"/><rect x="38.79" y="54.30" width="2.09" height="2.09"/><rect x="40.73" y="54.30" width="2.09" height="2.09"/><rect x="42.67" y="54.30" width="2.09" height="2.09"/><rect x="46.55" y="54.30" width="2.09" height="2.09"/><rect x="56.24" y="54.30" width="2.09" height="2.09"/><rect x="0.00" y="56.24" width="2.09" height="2.09"/><rect x="3.88" y="56.24" width="2.09" height="2.09"/><rect x="5.82" y="56.24" width="2.09" height="2.09"/><rect x="7.76" y="56.24" width="2.09" height="2.09"/><rect x="11.64" y="56.24" width="2.09" height="2.09"/><rect x="15.52" y="56.24" width="2.09" height="2.09"/><rect x="19.39" y="56.24" width="2.09" height="2.09"/><rect x="21.33" y="56.24" width="2.09" height="2.09"/><rect x="23.27" y="56.24" width="2.09" height="2.09"/><rect x="31.03" y="56.24" width="2.09" height="2.09"/><rect x="36.85" y="56.24" width="2.09" height="2.09"/><rect x="42.67" y="56.24" width="2.09" height="2.09"/><rect x="44.61" y="56.24" width="2.09" height="2.09"/><rect x="46.55" y="56.24" width="2.09" height="2.09"/><rect x="48.48" y="56.24" width="2.09" height="2.09"/><rect x="50.42" y="56.24" width="2.09" height="2.09"/><rect x="54.30" y="56.24" width="2.09" height="2.09"/><rect x="58.18" y="56.24" width="2.09" height="2.09"/><rect x="62.06" y="56.24" width="2.09" height="2.09"/><rect x="0.00" y="58.18" width="2.09" height="2.09"/><rect x="3.88" y="58.18" width="2.09" height="2.09"/><rect x="5.82" y="58.18" width="2.09" height="2.09"/><rect x="7.76" y="58.18" width="2.09" height="2.09"/><rect x="11.64" y="58.18" width="2.09" height="2.09"/><rect x="31.03" y="58.18" width="2.09" height="2.09"/><rect x="32.97" y="58.18" width="2.09" height="2.09"/><rect x="42.67" y="58.18" width="2.09" height="2.09"/><rect x="46.55" y="58.18" width="2.09" height="2.09"/><rect x="48.48" y="58.18" width="2.09" height="2.09"/><rect x="60.12" y="58.18" width="2.09" height="2.09"/><rect x="0.00" y="60.12" width="2.09" height="2.09"/><rect x="11.64" y="60.12" width="2.09" height="2.09"/><rect x="15.52" y="60.12" width="2.09" height="2.09"/><rect x="17.45" y="60.12" width="2.09" height="2.09"/><rect x="19.39" y="60.12" width="2.09" height="2.09"/><rect x="21.33" y="60.12" width="2.09" height="2.09"/><rect x="23.27" y="60.12" width="2.09" height="2.09"/><rect x="32.97" y="60.12" width="2.09" height="2.09"/><rect x="36.85" y="60.12" width="2.09" height="2.09"/><rect x="44.61" y="60.12" width="2.09" height="2.09"/><rect x="48.48" y="60.12" width="2.09" height="2.09"/><rect x="54.30" y="60.12" width="2.09" height="2.09"/><rect x="56.24" y="60.12" width="2.09" height="2.09"/><rect x="58.18" y="60.12" width="2.09" height="2.09"/><rect x="60.12" y="60.12" width="2.09" height="2.09"/><rect x="62.06" y="60.12" width="2.09" height="2.09"/><rect x="0.00" y="62.06" width="2.09" height="2.09"/><rect x="1.94" y="62.06" width="2.09" height="2.09"/><rect x="3.88" y="62.06" width="2.09" height="2.09"/><rect x="5.82" y="62.06" width="2.09" height="2.09"/><rect x="7.76" y="62.06" width="2.09" height="2.09"/><rect x="9.70" y="62.06" width="2.09" height="2.09"/><rect x="11.64" y="62.06" width="2.09" height="2.09"/><rect x="15.52" y="62.06" width="2.09" height="2.09"/><rect x="25.21" y="62.06" width="2.09" height="2.09"/><rect x="27.15" y="62.06" width="2.09" height="2.09"/><rect x="32.97" y="62.06" width="2.09" height="2.09"/><rect x="36.85" y="62.06" width="2.09" height="2.09"/><rect x="40.73" y="62.06" width="2.09" height="2.09"/><rect x="46.55" y="62.06" width="2.09" height="2.09"/><rect x="50.42" y="62.06" width="2.09" height="2.09"/><rect x="54.30" y="62.06" width="2.09" height="2.09"/><rect x="56.24" y="62.06" width="2.09" height="2.09"/><rect x="60.12" y="62.06" width="2.09" height="2.09"/></g><rect x="23.8" y="23.8" width="16.5" height="16.5" fill="#fff" stroke="#ddd" stroke-width="0.4"/><path d="M28.5 30.5 Q31 27.5 34.5 29.5 Q32 31.5 28.5 30.5 Z" fill="#4a90e2"/><rect x="27" y="33" width="11" height="1.2" fill="#6aa0d8"/></svg></div>
<div class="ttl" style="left:338.5px;top:399.5px"><span class="c">待</span><span class="c">办</span><span class="c">文</span><span class="c">件</span></div>
<div class="vs" style="left:384px;top:399px;height:11px"></div>
<div class="tab2" style="left:395px;top:399.5px"><span class="c">综</span><span class="c">合</span><span class="c">待</span><span class="c">办</span></div>
<div class="vs" style="left:441px;top:399px;height:11px"></div>
<div class="tab2" style="left:450px;top:399.5px"><span class="c">待</span><span class="c">阅</span><span class="c">文</span><span class="c">件</span></div>
<div class="vs" style="left:496px;top:399px;height:11px"></div>
<div class="gl" style="left:339px;top:413px;width:359px"></div>
<div class="ul" style="left:339px;top:413px;width:36px"></div>
<div class="more" style="left:689.5px;top:399px">&raquo;</div>
<div class="bd" style="left:339px;top:422.6px">1</div>
<div class="tx" style="left:353.6px;top:423.0px;width:310px"></div>
<div class="dt" style="left:660px;top:423.9px">2023-11-29</div>
<div class="bd" style="left:339px;top:440.3px">2</div>
<div class="tx" style="left:353.6px;top:440.7px;width:310px"><span class="c">测</span><span class="c">试</span><span class="c">流</span><span class="c">程</span>-<span class="c">无</span><span class="c">标</span><span class="c">题</span></div>
<div class="dt" style="left:660px;top:441.6px">2023-11-29</div>
<div class="bd g" style="left:339px;top:458.0px">3</div>
<div class="tx" style="left:353.6px;top:458.4px;width:310px">wwwwwwwwwwwwwwwwwww11112</div>
<div class="dt" style="left:660px;top:459.3px">2023-11-04</div>
<div class="bd g" style="left:339px;top:475.7px">4</div>
<div class="tx" style="left:353.6px;top:476.1px;width:310px"><span style="letter-spacing:0.7px">ffffff</span></div>
<div class="dt" style="left:660px;top:477.0px">2023-08-24</div>
<div class="bd g" style="left:339px;top:493.4px">5</div>
<div class="tx" style="left:353.6px;top:493.8px;width:310px"><span class="c">同</span><span class="c">步</span><span class="c">字</span><span class="c">段</span><span class="c">标</span><span class="c">题</span></div>
<div class="dt" style="left:660px;top:494.7px">2023-08-24</div>
<div class="ttl" style="left:708px;top:71.5px"><span class="c">业</span><span class="c">务</span><span class="c">系</span><span class="c">统</span></div>
<div class="gl" style="left:708px;top:83.5px;width:186px"></div>
<div class="ul" style="left:708px;top:83.5px;width:35px"></div>
<div class="bi" style="left:708px;top:93.0px;background:#fbaa1d"><svg width="19" height="19" viewBox="0 0 19 19" style="position:absolute;left:0;top:0;"><path d="M10 4.2 L15.2 8.4 L14 8.4 L14 14.9 L6 14.9 L6 8.4 L4.8 8.4 Z" fill="#fff"/><rect x="8.7" y="9.2" width="2.6" height="4.9" fill="#fdd28a"/></svg></div>
<div class="lb2" style="left:732.5px;top:98.8px"><span class="c">仓</span><span class="c">储</span><span class="c">系</span><span class="c">统</span></div>
<div class="bi" style="left:801.2px;top:93.0px;background:#2f80f5"><svg width="19" height="19" viewBox="0 0 19 19" style="position:absolute;left:0;top:0;"><circle cx="9.2" cy="10" r="5.2" fill="#fff"/><path d="M9.6 4.2 L9.6 9.6 L15 9.6 Q15 4.6 9.6 4.2 Z" fill="#2f80f5"/><path d="M10.6 4.5 L10.6 8.6 L14.6 8.6 Q14.2 5.2 10.6 4.5 Z" fill="#fff"/></svg></div>
<div class="lb2" style="left:826px;top:98.8px"><span class="c">报</span><span class="c">表</span><span class="c">中</span><span class="c">心</span></div>
<div class="bi" style="left:708px;top:117.5px;background:#2f80f5"><svg width="19" height="19" viewBox="0 0 19 19" style="position:absolute;left:0;top:0;"><rect x="3.7" y="4.9" width="8.6" height="8.9" rx="1" fill="#fff"/><path d="M6.9 7.3 L9.6 9.35 L6.9 11.4 Z" fill="#2f80f5"/><path d="M13 8.2 L15.9 5.6 L15.9 13.1 L13 10.6 Z" fill="#fff"/></svg></div>
<div class="lb2" style="left:732.5px;top:123.3px"><span class="c">视</span><span class="c">频</span><span class="c">会</span><span class="c">议</span></div>
<div class="bi" style="left:801.2px;top:117.5px;background:#ef4a56"><svg width="19" height="19" viewBox="0 0 19 19" style="position:absolute;left:0;top:0;"><circle cx="9.7" cy="9.8" r="5.6" fill="#fff"/><circle cx="9.7" cy="9.8" r="3.2" fill="#ef4b55"/><circle cx="9.7" cy="9.8" r="2.2" fill="#fff"/><circle cx="9.7" cy="9.8" r="1" fill="#ef4b55"/></svg></div>
<div class="lb2" style="left:826px;top:123.3px">IT<span class="c">管</span><span class="c">理</span><span class="c">系</span><span class="c">统</span></div>
<div class="bi" style="left:708px;top:142.0px;background:#fbaa1d"><svg width="19" height="19" viewBox="0 0 19 19" style="position:absolute;left:0;top:0;"><rect x="4.2" y="5.8" width="11.2" height="8.1" rx="0.8" fill="#fff"/><path d="M4.6 6.6 L9.8 10 L15 6.6" stroke="#fbaa1d" stroke-width="1" fill="none"/></svg></div>
<div class="lb2" style="left:732.5px;top:147.8px">GMAIL</div>
<div class="bi" style="left:801.2px;top:142.0px;background:#40b65e"><svg width="19" height="19" viewBox="0 0 19 19" style="position:absolute;left:0;top:0;"><rect x="5.6" y="4.6" width="8.6" height="10.6" rx="0.8" fill="#fff"/><rect x="7.2" y="6.4" width="5" height="3.6" fill="#9ad8a8"/><circle cx="13" cy="13.6" r="2.6" fill="#40b65e"/><circle cx="13" cy="13.6" r="1.7" fill="#9ad8a8"/></svg></div>
<div class="lb2" style="left:826px;top:147.8px"><span class="c">日</span><span class="c">程</span><span class="c">管</span><span class="c">理</span></div>
<div class="bi" style="left:708px;top:166.5px;background:#ef4a56"><svg width="19" height="19" viewBox="0 0 19 19" style="position:absolute;left:0;top:0;"><path d="M6.5 5.5 L8.3 6.8 L9.7 5.3 L11.1 6.8 L12.9 5.5 L12 8 L7.4 8 Z" fill="#fff"/><path d="M7.4 8.8 L12 8.8 Q16.2 12 15.6 14.6 Q15.4 15.8 14 15.8 L5.4 15.8 Q4 15.8 3.8 14.6 Q3.4 12 7.4 8.8 Z" fill="#fff"/><path d="M8.3 10.8 L9.7 12.4 L11.1 10.8 M9.7 12.4 L9.7 14.6 M8.5 13 L10.9 13" stroke="#ef4b55" stroke-width="0.9" fill="none"/></svg></div>
<div class="lb2" style="left:732.5px;top:172.3px"><span class="c">固</span><span class="c">定</span><span class="c">资</span><span class="c">产</span><span class="c">管</span><span class="c">理</span></div>
<div class="bi" style="left:801.2px;top:166.5px;background:#8a64d6"><svg width="19" height="19" viewBox="0 0 19 19" style="position:absolute;left:0;top:0;"><path d="M6.4 5.8 L13 5.8 L14.4 9 L15.3 9 L15.3 14.2 L13.8 14.2 L13.8 15.4 L12.2 15.4 L12.2 14.2 L7.2 14.2 L7.2 15.4 L5.6 15.4 L5.6 14.2 L4.1 14.2 L4.1 9 L5 9 Z" fill="#fff"/><path d="M7.2 7 L12.2 7 L13 8.8 L6.4 8.8 Z" fill="#8a63d2"/><circle cx="6.6" cy="11.4" r="0.9" fill="#8a63d2"/><circle cx="12.8" cy="11.4" r="0.9" fill="#8a63d2"/></svg></div>
<div class="lb2" style="left:826px;top:172.3px"><span class="c">车</span><span class="c">辆</span><span class="c">管</span><span class="c">理</span></div>
<div class="bi" style="left:708px;top:191.0px;background:#687883"><svg width="19" height="19" viewBox="0 0 19 19" style="position:absolute;left:0;top:0;"><rect x="3.7" y="4.6" width="12.1" height="8.2" rx="0.6" fill="#fff"/><rect x="9.2" y="12.8" width="1.2" height="2.6" fill="#fff"/><rect x="7" y="15" width="5.6" height="0.9" fill="#fff"/><text x="9.75" y="11.2" font-family="Liberation Sans" font-size="5.4" font-weight="bold" text-anchor="middle" fill="#9aa5ad">OA</text></svg></div>
<div class="lb2" style="left:732.5px;top:196.8px"><span class="c">集</span><span class="c">团</span>OA</div>
<div class="bi" style="left:801.2px;top:191.0px;background:#2f80f5"><svg width="19" height="19" viewBox="0 0 19 19" style="position:absolute;left:0;top:0;"><rect x="3.7" y="4.9" width="8.6" height="8.9" rx="1" fill="#fff"/><path d="M6.9 7.3 L9.6 9.35 L6.9 11.4 Z" fill="#2f80f5"/><path d="M13 8.2 L15.9 5.6 L15.9 13.1 L13 10.6 Z" fill="#fff"/></svg></div>
<div class="lb2" style="left:826px;top:196.8px"><span class="c">集</span><span class="c">团</span><span class="c">视</span><span class="c">频</span><span class="c">会</span><span class="c">议</span></div>
<div class="ttl" style="left:708px;top:225px"><span class="c">会</span><span class="c">议</span><span class="c">管</span><span class="c">理</span></div>
<div class="gl" style="left:708px;top:237px;width:186px"></div>
<div class="ul" style="left:708px;top:237px;width:35px"></div>
<div class="more" style="left:885.5px;top:224px">&raquo;</div>
<div class="cb" style="left:708px;top:248.0px"></div>
<div class="tx" style="left:721px;top:247.5px;width:170px"><span class="c">突</span><span class="c">发</span><span class="c">！</span><span class="c">河</span><span class="c">南</span><span class="c">前</span><span class="c">首</span><span class="c">富</span><span class="c">被</span><span class="c">立</span><span class="c">案</span><span class="c">调</span><span class="c">查</span><span class="c">，</span><span class="c">旗</span><span class="c">下</span><span class="c">明</span><span class="c">星</span><span class="c">公</span>...</div>
<div class="cb" style="left:708px;top:265.6px"></div>
<div class="tx" style="left:721px;top:265.1px;width:170px"><span class="c">黑</span><span class="c">龙</span><span class="c">江</span><span class="c">一</span><span class="c">位</span>90<span class="c">后</span><span class="c">干</span><span class="c">部</span><span class="c">被</span><span class="c">查</span><span class="c">，</span><span class="c">在</span><span class="c">职</span><span class="c">大</span><span class="c">专</span><span class="c">学</span><span class="c">历</span><span class="c">，</span>...</div>
<div class="cb" style="left:708px;top:283.2px"></div>
<div class="tx" style="left:721px;top:282.7px;width:170px"><span class="c">投</span>2<span class="c">亿</span><span class="c">建</span><span class="c">的</span><span class="c">地</span><span class="c">铁</span><span class="c">站</span><span class="c">成</span><span style="margin-left:3.5px">“</span><span class="c">孤</span><span class="c">岛</span><span style="margin-right:3.5px">”</span><span class="c">，</span><span class="c">是</span><span class="c">什</span><span class="c">么</span><span class="c">原</span><span class="c">因</span>...</div>
<div class="cb" style="left:708px;top:300.8px"></div>
<div class="tx" style="left:721px;top:300.3px;width:170px"><span class="c">没</span><span class="c">听</span><span class="c">妈</span><span class="c">妈</span><span class="c">话</span><span class="c">学</span><span class="c">了</span><span class="c">物</span><span class="c">理</span><span class="c">他</span><span class="c">拿</span><span class="c">了</span><span class="c">诺</span><span class="c">奖</span></div>
<div class="cb" style="left:708px;top:318.4px"></div>
<div class="tx" style="left:721px;top:317.9px;width:170px"><span class="c">为</span><span class="c">科</span><span class="c">学</span><span class="c">插</span><span class="c">上</span><span class="c">跨</span><span class="c">越</span><span class="c">山</span><span class="c">水</span><span class="c">的</span><span class="c">翅</span><span class="c">膀</span></div>
<div class="ttl" style="left:708px;top:339.8px"><span class="c">人</span><span class="c">力</span><span class="c">资</span><span class="c">源</span><span class="c">在</span><span class="c">线</span><span class="c">业</span><span class="c">务</span></div>
<div class="vs" style="left:789px;top:338px;height:11px"></div>
<div class="tab2" style="left:799px;top:339.8px"><span class="c">项</span><span class="c">目</span><span class="c">管</span><span class="c">理</span><span class="c">平</span><span class="c">台</span></div>
<div class="gl" style="left:708px;top:352px;width:186px"></div>
<div class="ul" style="left:708px;top:352px;width:71px"></div>
<div class="sq" style="left:708px;top:365.5px"></div>
<div class="lb2" style="left:719px;top:363.5px"><span class="c">员</span><span class="c">工</span><span class="c">档</span><span class="c">案</span></div>
<div class="sq" style="left:801.5px;top:365.5px"></div>
<div class="lb2" style="left:812.5px;top:363.5px"><span class="c">查</span><span class="c">询</span><span class="c">下</span><span class="c">属</span><span class="c">信</span><span class="c">息</span></div>
<div class="gl" style="left:708px;top:377.0px;width:186px"></div>
<div class="sq" style="left:708px;top:385.0px"></div>
<div class="lb2" style="left:719px;top:383.0px"><span class="c">员</span><span class="c">工</span><span class="c">管</span><span class="c">理</span></div>
<div class="sq" style="left:801.5px;top:385.0px"></div>
<div class="lb2" style="left:812.5px;top:383.0px"><span class="c">查</span><span class="c">询</span><span class="c">我</span><span class="c">的</span><span class="c">工</span><span class="c">资</span></div>
<div class="gl" style="left:708px;top:396.5px;width:186px"></div>
<div class="ttl" style="left:708px;top:409px"><span class="c">外</span><span class="c">部</span><span class="c">邮</span><span class="c">件</span></div>
<div class="gl" style="left:708px;top:421px;width:186px"></div>
<div class="ul" style="left:708px;top:421px;width:35px"></div>
<div class="more" style="left:885.5px;top:408px">&raquo;</div>
<div class="cb" style="left:708px;top:432.4px"></div>
<div class="tx" style="left:721px;top:431.9px;width:170px"><span class="c">目</span><span class="c">标</span><span class="c">：</span><span class="c">大</span><span class="c">满</span><span class="c">贯</span><span class="c">！</span><span class="c">连</span><span class="c">场</span>4-0<span class="c">，</span><span class="c">陈</span><span class="c">梦</span><span class="c">状</span><span class="c">态</span><span class="c">爆</span><span class="c">棚</span><span class="c">，</span>...</div>
<div class="cb" style="left:708px;top:450.1px"></div>
<div class="tx" style="left:721px;top:449.6px;width:170px"><span class="c">广</span><span class="c">西</span><span class="c">政</span><span class="c">法</span><span class="c">委</span><span class="c">书</span><span class="c">记</span><span class="c">到</span><span class="c">南</span><span class="c">宁</span><span class="c">市</span><span class="c">调</span><span class="c">研</span><span class="c">：</span><span class="c">着</span><span class="c">力</span><span class="c">推</span><span class="c">进</span><span class="c">解</span>...</div>
<div class="cb" style="left:708px;top:467.8px"></div>
<div class="tx" style="left:721px;top:467.3px;width:170px"><span class="c">列</span><span class="c">车</span><span class="c">命</span><span class="c">案</span><span class="c">背</span><span class="c">后</span>:<span class="c">精</span><span class="c">神</span><span class="c">病</span><span class="c">患</span><span class="c">者</span><span class="c">管</span><span class="c">理</span><span class="c">之</span><span class="c">困</span><span class="c">，</span><span class="c">有</span><span style="margin-left:3.5px">“</span>...</div>
<div class="cb" style="left:708px;top:485.5px"></div>
<div class="tx" style="left:721px;top:485.0px;width:170px"><span class="c">越</span><span class="c">南</span><span class="c">打</span><span class="c">工</span><span class="c">人</span><span class="c">不</span><span class="c">加</span><span class="c">班</span><span class="c">逼</span><span class="c">急</span><span class="c">中</span><span class="c">国</span><span class="c">老</span><span class="c">板</span></div>
<div class="cb" style="left:708px;top:503.2px"></div>
<div class="tx" style="left:721px;top:502.7px;width:170px"><span class="c">巴</span><span class="c">厘</span><span class="c">岛</span><span class="c">命</span><span class="c">案</span><span class="c">男</span><span class="c">子</span><span class="c">母</span><span class="c">亲</span><span class="c">首</span><span class="c">发</span><span class="c">声</span></div>
<div class="nav act" style="left:219px"><svg width="56" height="53" viewBox="0 0 56 53" style="position:absolute;left:0;top:0;"><rect x="20.3" y="12.2" width="6.9" height="8.6" rx="1.3" fill="#fff"/><rect x="20.3" y="23" width="6.9" height="3.2" rx="1.3" fill="#fff"/><rect x="28.9" y="12.2" width="6.9" height="3.5" rx="1.3" fill="#fff"/><rect x="28.9" y="17.4" width="6.9" height="8.8" rx="1.3" fill="#fff"/></svg><div class="nl"><span class="c">首</span><span class="c">页</span></div></div>
<div class="nav" style="left:275px"><svg width="56" height="53" viewBox="0 0 56 53" style="position:absolute;left:0;top:0;"><path d="M21 17.2 Q21 16 22 15.2 L26.8 11.6 Q28 10.8 29.2 11.6 L34 15.2 Q35 16 35 17.2 L35 24.9 Q35 26.4 33.5 26.4 L22.5 26.4 Q21 26.4 21 24.9 Z" fill="#fff"/><rect x="25.9" y="21.3" width="4.5" height="3.6" rx="0.6" fill="#4a90e2"/></svg><div class="nl"><span class="c">门</span><span class="c">户</span></div></div>
<div class="nav" style="left:331px"><svg width="56" height="53" viewBox="0 0 56 53" style="position:absolute;left:0;top:0;"><circle cx="28" cy="13.4" r="2.9" fill="#fff"/><circle cx="22.1" cy="23.6" r="2.9" fill="#fff"/><circle cx="34" cy="23.8" r="2.9" fill="#fff"/><path d="M25.6 14.6 Q22.3 16.2 21.6 18.6" stroke="#fff" stroke-width="1.5" fill="none" stroke-linecap="round"/><path d="M32.6 15.6 Q34.4 17.5 34.4 20" stroke="#fff" stroke-width="1.5" fill="none" stroke-linecap="round"/><path d="M24.6 25.6 Q27 27.2 30.2 26.9" stroke="#fff" stroke-width="1.5" fill="none" stroke-linecap="round"/></svg><div class="nl"><span class="c">流</span><span class="c">程</span><span class="c">中</span><span class="c">心</span></div></div>
<div class="nav" style="left:387px"><svg width="56" height="53" viewBox="0 0 56 53" style="position:absolute;left:0;top:0;"><rect x="20.7" y="12.9" width="15.3" height="12.4" rx="1.6" fill="#fff"/><path d="M22.4 15.2 L28.35 19.2 L34.3 15.2" stroke="#4a90e2" stroke-width="1.5" fill="none" stroke-linecap="round" stroke-linejoin="round"/></svg><div class="nl"><span class="c">邮</span><span class="c">件</span></div></div>
<div class="nav" style="left:443px"><svg width="56" height="53" viewBox="0 0 56 53" style="position:absolute;left:0;top:0;"><path d="M19.2 17 Q19.2 15.2 21 15.2 L25 15.2 Q30 14.5 34.5 11.6 Q36.2 10.8 36.2 12.6 L36.2 18.6 L36.9 19.3 L36.2 20 L36.2 25.6 Q36.2 27 34.8 26.2 L31.8 24.2 Q31.2 26.8 27.8 26.8 Q23.8 26.8 22.9 22.6 L21 21.9 Q19.2 21.9 19.2 20 Z" fill="#fff"/><ellipse cx="27.7" cy="23.7" rx="2.5" ry="1.1" fill="#4a90e2"/></svg><div class="nl"><span class="c">公</span><span class="c">告</span></div></div>
<div class="nav" style="left:499px"><svg width="56" height="53" viewBox="0 0 56 53" style="position:absolute;left:0;top:0;"><rect x="20.7" y="11.6" width="15.3" height="15" rx="1.8" fill="#fff"/><path d="M24 15.8 Q24 15.2 24.6 15.2 L27.6 15.2 L28.6 16.4 L32.2 16.4 Q32.8 16.4 32.8 17 L32.8 21.9 Q32.8 22.5 32.2 22.5 L24.6 22.5 Q24 22.5 24 21.9 Z" fill="#4a90e2"/><rect x="24" y="17.4" width="8.8" height="5.1" rx="0.5" fill="#4388dc"/></svg><div class="nl"><span class="c">公</span><span class="c">文</span></div></div>
<div class="nav" style="left:555px"><svg width="56" height="53" viewBox="0 0 56 53" style="position:absolute;left:0;top:0;"><path d="M23.3 10.5 L33.9 10.5 Q37.3 10.5 37.3 13.9 L37.3 20.9 Q37.3 24.3 33.9 24.3 L33.4 24.3 L31.5 27.9 L29.6 24.3 L23.3 24.3 Q19.9 24.3 19.9 20.9 L19.9 13.9 Q19.9 10.5 23.3 10.5 Z" fill="#fff"/><circle cx="24.4" cy="17.8" r="1.3" fill="#4a90e2"/><circle cx="28.7" cy="17.8" r="1.3" fill="#4a90e2"/><circle cx="32.8" cy="17.8" r="1.3" fill="#4a90e2"/></svg><div class="nl"><span class="c">信</span><span class="c">息</span></div></div>
<svg width="100" height="53" viewBox="0 0 100 53" style="position:absolute;left:115px;top:2px"><circle cx="20" cy="26.4" r="13" fill="#fff"/><path d="M6.6 29.2 Q9.5 21.5 17.5 20.8" stroke="#4a90e2" stroke-width="2.4" fill="none"/><path d="M24.5 28.6 Q29 30.2 33.6 27" stroke="#4a90e2" stroke-width="2.4" fill="none"/><circle cx="20.1" cy="26.4" r="6" fill="#4a90e2"/><circle cx="20.1" cy="26.4" r="4.2" fill="#fff"/></svg><div style="position:absolute;left:151px;top:14px;width:27px;height:14px;background:#b4d0f4;filter:blur(2px);border-radius:5px"></div><div style="position:absolute;left:153px;top:15px;width:11px;height:11px;background:#e4eefb;filter:blur(2.2px);border-radius:50%"></div><div style="position:absolute;left:166px;top:16px;width:11px;height:10px;background:#cfe1f8;filter:blur(2.2px);border-radius:50%"></div><div style="position:absolute;left:152px;top:30px;width:26px;height:9px;background:#80b2ec;filter:blur(2px);border-radius:3px"></div><div style="position:absolute;left:179px;top:18.3px;font-size:12.5px;line-height:13px;color:#fff;white-space:nowrap;letter-spacing:0px;font-weight:bold">矿业</div><div style="position:absolute;left:176px;top:31px;font-size:8.6px;line-height:8px;font-weight:bold;color:#fff;white-space:nowrap;letter-spacing:-0.3px">MINING</div>
</body></html>
